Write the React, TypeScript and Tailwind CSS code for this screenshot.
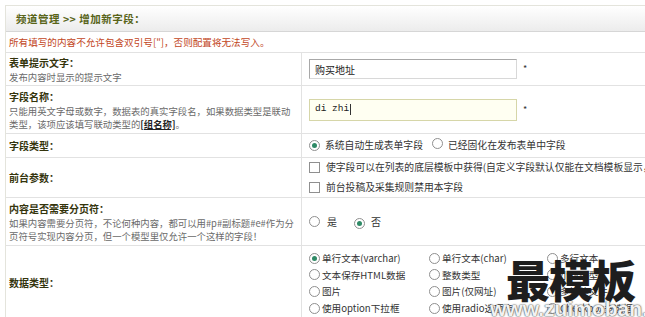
import React from "react"

function Radio({ on = false }: { on?: boolean }) {
    return (
        <span className="inline-flex items-center justify-center w-[11px] h-[11px] rounded-full border border-[#8f8f8f] bg-white shrink-0">
            {on && <span className="w-[5px] h-[5px] rounded-full bg-[#2f8a66]" />}
        </span>
    )
}

function Check() {
    return <span className="inline-block w-[11px] h-[11px] border border-[#8f8f8f] bg-white shrink-0" />
}

function Label({ children }: { children: React.ReactNode }) {
    return <p className="text-[10px] font-bold text-[#34340c] leading-[16px]">{children}</p>
}

function Desc({ children }: { children: React.ReactNode }) {
    return <p className="text-[9.4px] text-[#6a6a6a] leading-[13px]">{children}</p>
}

function Row({ h, left, right, leftClass = "justify-center", rightClass = "justify-center" }: { h: string; left: React.ReactNode; right: React.ReactNode; leftClass?: string; rightClass?: string }) {
    return (
        <div className={"flex border-b border-[#e2e2e2] " + h}>
            <div className={"w-[296px] shrink-0 border-r border-[#e2e2e2] pl-[3px] pr-[6px] flex flex-col " + leftClass}>{left}</div>
            <div className={"flex-1 pl-[7px] flex flex-col " + rightClass}>{right}</div>
        </div>
    )
}

const dataTypes = [
    ["单行文本(varchar)", "单行文本(char)", "多行文本"],
    ["文本保存HTML数据", "整数类型", "小数类型"],
    ["图片", "图片(仅网址)", "多媒体文件"],
    ["使用option下拉框", "使用radio选项卡", "Checkbox多选框"],
]

export default function App() {
    return (
        <div className="relative w-[645px] h-[317px] overflow-hidden bg-white font-['Noto_Sans_CJK_SC',sans-serif]">
            <div className="ml-[5px] mt-[5px] w-[720px] border-l border-t border-[#e4e4dc]">
                <div className="h-[26px] flex items-center pl-[10px] bg-gradient-to-b from-white to-[#ececec] border-b border-[#d6d6d6]">
                    <span className="text-[10.5px] font-bold text-[#586418] tracking-[0.5px]">频道管理 &gt;&gt; 增加新字段：</span>
                </div>
                <div className="h-[21px] flex items-center pl-[3px] border-b border-[#e2e2e2]">
                    <span className="text-[9.6px] text-[#c2461c]">所有填写的内容不允许包含双引号["]，否则配置将无法写入。</span>
                </div>
                <Row
                    h="h-[33px]"
                    left={<><Label>表单提示文字：</Label><Desc>发布内容时显示的提示文字</Desc></>}
                    right={
                        <div className="flex items-center gap-[6px]">
                            <div className="w-[208px] h-[20px] border border-[#a8a8a8] border-r-[#d8d8d8] border-b-[#d8d8d8] flex items-center pl-[5px] text-[10px] text-[#222]">购买地址</div>
                            <span className="text-[9px] text-[#333]">*</span>
                        </div>
                    }
                />
                <Row
                    h="h-[48px]"
                    left={<><Label>字段名称：</Label><Desc>只能用英文字母或数字，数据表的真实字段名，如果数据类型是联动类型，该项应该填写联动类型的<span className="text-[#222] font-bold underline">[组名称]</span>。</Desc></>}
                    right={
                        <div className="flex items-center gap-[6px]">
                            <div className="w-[208px] h-[22px] border border-[#d6d6a8] bg-[#fffff2] flex items-center pl-[5px] text-[9.5px] text-[#222] font-['Liberation_Mono',monospace]">di zhi<span className="w-px h-[11px] bg-[#333] ml-[1px]" /></div>
                            <span className="text-[9px] text-[#333]">*</span>
                        </div>
                    }
                />
                <Row
                    h="h-[24px]"
                    left={<Label>字段类型：</Label>}
                    right={
                        <div className="flex items-center text-[9.8px] text-[#333]">
                            <Radio on /><span className="ml-[5px]">系统自动生成表单字段</span>
                            <span className="ml-[9px]"><Radio /></span><span className="ml-[5px]">已经固化在发布表单中字段</span>
                        </div>
                    }
                />
                <Row
                    h="h-[40px]"
                    left={<Label>前台参数：</Label>}
                    right={
                        <div className="flex flex-col gap-[5px] text-[9.8px] text-[#333]">
                            <div className="flex items-center gap-[6px] whitespace-nowrap"><Check /><span>使字段可以在列表的底层模板中获得(自定义字段默认仅能在文档模板显示，列表中需要修改模板)</span></div>
                            <div className="flex items-center gap-[6px]"><Check /><span>前台投稿及采集规则禁用本字段</span></div>
                        </div>
                    }
                />
                <Row
                    h="h-[48px]"
                    left={<><Label>内容是否需要分页符：</Label><Desc>如果内容需要分页符，不论何种内容，都可以用#p#副标题#e#作为分页符号实现内容分页，但一个模型里仅允许一个这样的字段！</Desc></>}
                    right={
                        <div className="flex items-center text-[10px] text-[#333]">
                            <Radio /><span className="ml-[7px]">是</span>
                            <span className="ml-[17px]"><Radio on /></span><span className="ml-[6px]">否</span>
                        </div>
                    }
                />
                <Row
                    h="h-[80px]"
                    leftClass="justify-start pt-[29px]"
                    rightClass="justify-start pt-[6px]"
                    left={<Label>数据类型：</Label>}
                    right={
                        <div className="grid grid-cols-[120px_118px_120px] gap-y-[4.7px] text-[9.6px] text-[#333]">
                            {dataTypes.flat().map((t, i) => (
                                <div key={i} className="flex items-center gap-[2px] h-[12px] whitespace-nowrap">
                                    <Radio on={i === 0} /><span>{t}</span>
                                </div>
                            ))}
                        </div>
                    }
                />
            </div>
            <div className="absolute left-[506px] top-[255px] text-[44px] leading-[48px] font-black text-[#1e1e1e] tracking-[-1px]">最模板</div>
            <div className="absolute left-[490px] top-[298px] text-[21px] leading-[21px] font-bold text-[#f2f2f2] font-['Liberation_Sans',sans-serif] [text-shadow:0_0_2px_#555,0_0_1px_#333]">www.zuimoban.com</div>
        </div>
    )
}
